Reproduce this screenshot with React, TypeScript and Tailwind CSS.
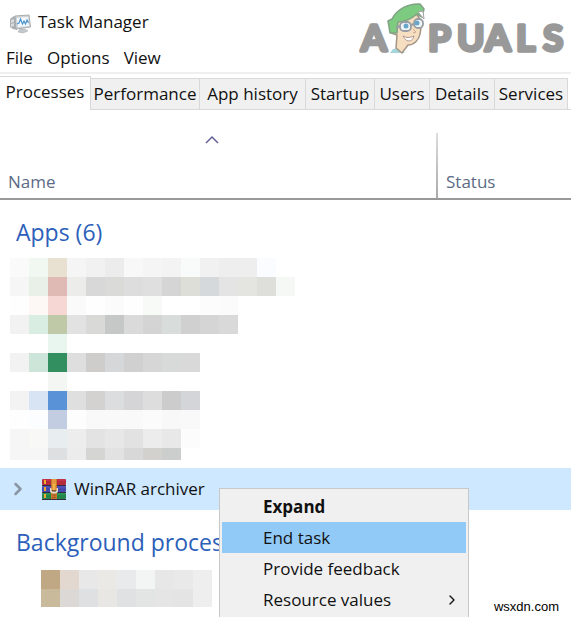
import { useState } from "react";
import { ChevronRight } from "lucide-react";

const tabs = [
  { name: "Performance", width: "w-[109px]" },
  { name: "App history", width: "w-[106px]" },
  { name: "Startup", width: "w-[69px]" },
  { name: "Users", width: "w-[55px]" },
  { name: "Details", width: "w-[65px]" },
  { name: "Services", width: "w-[73px]" },
];

const menuItems = ["Expand", "End task", "Provide feedback", "Resource values"];

// one string per row, one colour per cell
const appRows = [
  "fafafa f1f8f1 e8e0d0 f5f5f5 f1f1f1 ececec f8f8f8 f5f5f5 f3f3f3 f9fafa f1f1f1 eeeeee eeeeee fafcff",
  "f6f6f6 e8f0e7 dfb9b4 ececea d8d8d8 dadad8 dddddd dfdfdf d5d5d5 deded9 d6d9db e4e4e4 e4e4e0 dededb f6f8f6",
  "fefefe fdf7f6 f7d7d4 fafafa fefefe fbfbfb fefefe f8faf8 ffffff ffffff fcfcfc fbfbfb",
  "f2f2f2 daede2 c0c9a7 e2e2e2 d9d9d7 c5c8c7 dadada d4d4d4 d8dcda d0d0d0 d5d5d5 d9d9d9",
  "ffffff ffffff e8f6ef",
  "f2f2f2 cde4d8 328f60 dedede cecdcb d5d7d9 d0d0d0 d6d6d6 d8dad9 d9d9d9",
  "ffffff ffffff f4f6f4",
  "f3f3f3 d8e4f4 5992d6 dfdfdf d3d2d0 dcdddf d5d5d7 dddddd cccccc d3d5d8",
  "fefefe fcfdff c3cde1 fdfdfd f9f9f9 f9f9f9 f9f9f9 fbfbfb f8f8f8 f9f9f9",
  "f6f6f6 f8f8f6 e8eef0 ededed e3e3e3 e7e7e7 e2e2e2 ececec e8e8e8 fcfcfc",
  "f6f6f6 f6f6f6 dddfe0 ececec d5d5d4 e2e2e2 d8d8d8 d3d1ce cccecd",
];

const backgroundRows = [
  "c1a884 e3d8d0 e8e8e8 ebe9e6 e8eaec f3f5f4 e7e7e7 e9e9e9 eeeeee",
  "c9ba9c dcd8d5 dfe0e2 e9e7e4 dfe1e3 e3e4e4 e5e5e5 e4e4e4 eeeeee",
];

function Mosaic({ rows }: { rows: string[] }) {
  return (
    <div className="overflow-hidden">
      {rows.map((row, y) => (
        <div key={y} className="flex">
          {row.split(" ").map((color, x) => (
            <div
              key={x}
              className="h-[19px] w-[19px] shrink-0"
              style={{ backgroundColor: `#${color}` }}
            />
          ))}
        </div>
      ))}
    </div>
  );
}

function TaskManagerIcon() {
  return (
    <svg className="h-5 w-[22px]" viewBox="0 0 22 20">
      <path d="M0 5l4-3 3 1v13l-4-1-3-2z" fill="#a9adb0" />
      <path d="M1 6l3-1v3l-3 1zM1 10l3-1v3l-3 1z" fill="#d9dcdd" />
      <path d="M5 2l14-1 1.500 12L6 15z" fill="#d2d6d8" stroke="#a8adb0" />
      <path d="M7 4l11-1 1 9-11 1z" fill="#f4f9fd" />
      <path
        d="M7 10l2-1 1.500-4 2 5 1.500-3 1.500 3 1.500-4 1.500 3"
        fill="none"
        stroke="#4b93cc"
        strokeWidth="1.200"
      />
      <path d="M10 15h5l3 2-5 2-5-1z" fill="#c5c9cb" stroke="#a3a8ab" strokeWidth=".5" />
    </svg>
  );
}

function WinRarIcon() {
  return (
    <svg className="h-[22px] w-6" viewBox="0 0 24 22">
      <rect y="1" width="24" height="6" rx="1" fill="#b52a3c" />
      <rect y="8" width="24" height="6" rx="1" fill="#4748ad" />
      <rect y="15" width="24" height="6" rx="1" fill="#24864a" />
      <path d="M1 2h22" stroke="#d23a55" />
      <path d="M1 9h22" stroke="#5c5cc4" />
      <path d="M1 16h22" stroke="#35a05a" />
      <path d="M0 7.500h24M0 14.500h24M0 21.500h24" stroke="#342b3e" />
      <path d="M3 2v4M3 9v4M3 16v4" stroke="#f0a82e" strokeWidth="2" />
      <path d="M9 1h6v20H9z" fill="#c9762a" />
      <path d="M10 1h4v6h-4z" fill="#e59a3c" />
      <path d="M10 17h4M10 19.500h4" stroke="#9e5b23" />
      <path d="M8 10h1.500v3h5v-3H16v3c0 2-2 2.500-4 2.500S8 15 8 13z" fill="#e4dccb" />
      <path d="M12 6v6" stroke="#f3b34b" strokeWidth="3" />
      <path d="M10 13h4" stroke="#4a3730" />
    </svg>
  );
}

function Logo() {
  return (
    <svg className="h-[58px] w-[212px]" viewBox="0 0 212 58" role="img" aria-label="Appuals">
      <g
        fill="#999"
        stroke="#999"
        strokeWidth="3.500"
        strokeLinejoin="round"
        fontFamily="Lato, sans-serif"
        fontSize="37"
        fontWeight="700"
      >
        <text x="2" y="51">A</text>
        <text x="69 98 126 157 184" y="51">PUALS</text>
      </g>
      {/* mascot */}
      <g opacity=".8">
        <path d="M31 53l3-4 5-1 5 3 2 2z" fill="#8dcbd2" />
        <path
          d="M37 28c-6-2-8 5-2 6l3 1-1 13 6 5 6-8c6 0 11-5 12-11l2-12-7-10-17 6z"
          fill="#f5d6b1"
          stroke="#8d7a69"
          strokeWidth="1.500"
        />
        <path
          d="M31 33l-2-12 4-2C38 9 50 3 61 4l4 5-2 8-5-3c-7 6-13 8-19 8l-1 11z"
          fill="#5dbf62"
          stroke="#638b68"
          strokeWidth="1.500"
          strokeLinejoin="round"
        />
        <path d="M59 12l5-1 1 8z" fill="#fff" stroke="#8b8b8b" />
        <rect x="41" y="22" width="11" height="9" rx="4" fill="#eef5f8" stroke="#7f868e" strokeWidth="1.800" />
        <rect x="55" y="19" width="9" height="9" rx="4" fill="#eef5f8" stroke="#7f868e" strokeWidth="1.800" />
        <circle cx="47" cy="26" r="2.500" fill="#4591bd" />
        <circle cx="58" cy="23" r="2.500" fill="#4591bd" />
        <path d="M37 28l4-2M52 25l3-1" stroke="#7f868e" strokeWidth="2" />
        <path d="M54 29l3 3-3 1" fill="none" stroke="#bd9272" />
        <path d="M44 36c4 2 6 2 11 0-1 5-7 8-11 0z" fill="#fff" stroke="#957b70" />
      </g>
    </svg>
  );
}

export default function App() {
  const [selected, setSelected] = useState("End task");

  return (
    <div className="relative min-h-screen overflow-hidden bg-white font-['Open_Sans',sans-serif] text-[17px] leading-6 text-[#111]">
      <header className="flex h-[47px] items-center gap-1.5 pl-2.5">
        <TaskManagerIcon />
        <h1 className="whitespace-nowrap pb-1">Task Manager</h1>
      </header>
      <div className="absolute top-0 right-0">
        <Logo />
      </div>

      <nav className="flex h-[27px] items-center gap-3.5 border-b-2 border-[#efefef] px-1.5 pb-1">
        <button>File</button>
        <button>Options</button>
        <button>View</button>
      </nav>

      <div className="flex h-9 items-end" role="tablist">
        <button
          role="tab"
          aria-selected="true"
          className="h-[34px] w-[91px] shrink-0 border-t border-r border-[#d9d9d9] pb-1"
        >
          Processes
        </button>
        {tabs.map((tab) => (
          <button
            key={tab.name}
            role="tab"
            aria-selected="false"
            className={`${tab.width} h-8 shrink-0 whitespace-nowrap border-y border-r border-[#d9d9d9] bg-[#f0f0f0]`}
          >
            {tab.name}
          </button>
        ))}
        <div className="grow border-b border-[#d9d9d9]" />
      </div>

      <div className="flex h-[90px] items-end border-b-2 border-[#999] text-[#5c6b85]">
        <div className="flex h-full w-[436px] shrink-0 flex-col justify-between pt-6 pb-1 pl-2">
          <svg className="mr-5 h-3 w-4 self-center" viewBox="0 0 16 12">
            <path d="M2 9l6-6 6 6" fill="none" stroke="#626097" strokeWidth="1.500" />
          </svg>
          <span>Name</span>
        </div>
        <div className="h-[65px] w-0.5 bg-linear-to-b from-[#ddd] to-[#aaa]" />
        <span className="pb-1 pl-2">Status</span>
      </div>

      <main>
        <h2 className="px-4 pt-4 pb-2.5 text-[23px] leading-8 text-[#2d5fba]">Apps (6)</h2>
        <div className="h-[202px] overflow-hidden pl-2.5">
          <Mosaic rows={appRows} />
        </div>

        <div className="relative mt-2 flex h-[42px] items-center bg-[#cde8ff] pl-2">
          <ChevronRight className="h-5 w-5 text-[#8a96a3]" strokeWidth={3} />
          <div className="ml-3.5 flex items-center gap-2">
            <WinRarIcon />
            <span>WinRAR archiver</span>
          </div>

          <div
            role="menu"
            className="absolute top-5 left-[219px] z-10 w-[250px] border border-[#c8c8c8] bg-[#f0f0f0] p-0.5"
          >
            {menuItems.map((item) => (
              <button
                key={item}
                role="menuitem"
                onMouseEnter={() => setSelected(item)}
                className={`flex h-[31px] w-full items-center justify-between pr-1.5 pl-[41px] ${
                  item === selected ? "bg-[#91c9f7]" : ""
                } ${item === "Expand" ? "font-bold" : ""}`}
              >
                {item}
                {item === "Resource values" && (
                  <ChevronRight className="h-4 w-4" strokeWidth={2} />
                )}
              </button>
            ))}
            <div className="h-2" />
          </div>
        </div>

        <h2 className="px-4 pt-4 pb-3 text-[23px] leading-8 whitespace-nowrap text-[#2d5fba]">
          Background processes
        </h2>
        <div className="h-[37px] overflow-hidden pl-[41px]">
          <Mosaic rows={backgroundRows} />
        </div>
      </main>

      <footer className="absolute right-3 bottom-0.5 font-['Liberation_Sans',sans-serif] text-[13px] leading-4 text-black">
        wsxdn.com
      </footer>
    </div>
  );
}
